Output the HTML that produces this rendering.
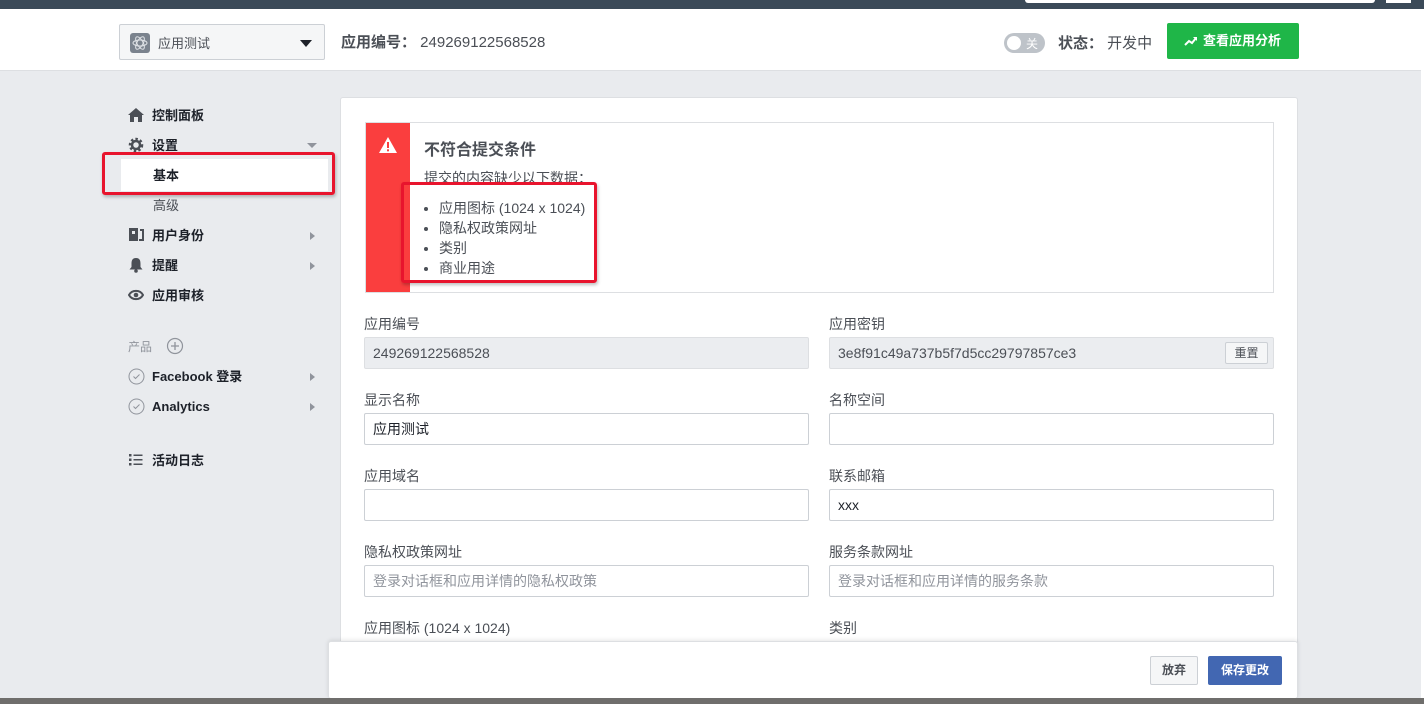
<!DOCTYPE html>
<html><head><meta charset="utf-8"><style>
*{box-sizing:border-box;margin:0;padding:0}
body{width:1424px;height:704px;overflow:hidden;background:#e9ebee;font-family:"Liberation Sans","Noto Sans CJK SC",sans-serif;color:#1d2129;position:relative}
.topbar{position:absolute;left:0;top:0;width:1424px;height:9px;background:#3b4a58}
.topbar .s{position:absolute;left:1025px;top:0;width:350px;height:3px;background:#fff;border-radius:0 0 3px 3px}
.topbar .s2{position:absolute;left:1386px;top:0;width:25px;height:3px;background:#fff}
.header{position:absolute;left:0;top:9px;width:1421px;height:62px;background:#fff;border-bottom:1px solid #dddfe2}
.rstrip{position:absolute;left:1421px;top:9px;width:3px;height:695px;background:#fff}
.sel{position:absolute;left:119px;top:24px;width:206px;height:36px;border:1px solid #ccd0d5;background:#f5f6f7;border-radius:2px}
.sel .ic{position:absolute;left:10px;top:8px;width:20px;height:20px;background:#7b838e;border-radius:3px}
.sel .t{position:absolute;left:38px;top:8px;font-size:13px;color:#4b4f56}
.sel .ar{position:absolute;right:12px;top:15px;border-left:6px solid transparent;border-right:6px solid transparent;border-top:7px solid #1d2129}
.appid{position:absolute;left:341px;top:31px;font-size:15px;color:#4b4f56}
.appid b{font-weight:bold;color:#4b4f56}
.tog{position:absolute;left:1004px;top:33px;width:41px;height:20px;border-radius:10px;background:#bec3c9}
.tog i{position:absolute;left:3px;top:3px;width:14px;height:14px;border-radius:50%;background:#fff}
.tog span{position:absolute;left:22px;top:2px;font-size:12px;color:#fff}
.status{position:absolute;left:1058px;top:32px;font-size:15px;color:#4b4f56}
.gbtn{position:absolute;left:1167px;top:23px;width:132px;height:36px;background:#1fb648;border-radius:2px;color:#fff;font-size:13px;font-weight:bold;line-height:36px;padding-left:36px}
.nav{position:absolute;left:128px;font-size:13px;font-weight:bold;color:#1d2129}
.nav .txt{position:absolute;left:24px;top:-2px;white-space:nowrap}
.tri{position:absolute;left:182px;top:5px;border-top:4px solid transparent;border-bottom:4px solid transparent;border-left:5px solid #90949c}
.sub{position:absolute;left:153px;font-size:13px;color:#4b4f56}
.redbox{position:absolute;border:3px solid #e8142d;border-radius:3px;box-shadow:1px 2px 3px rgba(0,0,0,.25)}
.panel{position:absolute;left:340px;top:97px;width:958px;height:600px;background:#fff;border:1px solid #dddfe2;border-radius:3px}
.warn{position:absolute;left:365px;top:122px;width:909px;height:171px;border:1px solid #dddfe2;background:#fff}
.warn .bar{position:absolute;left:0;top:0;width:44px;height:169px;background:#fa3e3e}
.warn h3{position:absolute;left:58px;top:13px;font-size:16px;font-weight:bold;color:#4b4f56}
.warn p{position:absolute;left:58px;top:45px;font-size:14px;color:#4b4f56}
.warn ul{position:absolute;left:73px;top:75px;font-size:14px;color:#4b4f56;line-height:20px}
.lbl{position:absolute;font-size:14px;color:#4b4f56}
.inp{position:absolute;width:445px;height:32px;border:1px solid #ccd0d5;border-radius:2px;background:#fff;font-size:14px;padding:7px 8px;color:#1d2129;line-height:16px}
.inp.ro{background:#ebedf0;border-color:#dddfe2;color:#4b4f56}
.inp.ph{color:#90949c}
.reset{position:absolute;right:5px;top:4px;height:22px;width:43px;border:1px solid #ccd0d5;background:#f5f6f7;font-size:12px;line-height:20px;text-align:center;color:#4b4f56;border-radius:2px}
.foot{position:absolute;left:328px;top:641px;width:970px;height:58px;background:#fff;border:1px solid #dddfe2;border-radius:3px;box-shadow:0 -1px 4px rgba(0,0,0,.1)}
.btn{position:absolute;top:14px;height:29px;font-size:12px;font-weight:bold;line-height:27px;text-align:center;border-radius:2px}
.bottom{position:absolute;left:0;top:698px;width:1424px;height:6px;background:#6f6e6c}
</style></head><body>
<div class="topbar"><div class="s"></div><div class="s2"></div></div>
<div class="header"></div>
<div class="rstrip"></div>
<div class="sel"><div class="ic"><svg width="20" height="20" viewBox="0 0 20 20"><g fill="none" stroke="#dfe2e6" stroke-width="1"><ellipse cx="10" cy="10" rx="7" ry="3"/><ellipse cx="10" cy="10" rx="7" ry="3" transform="rotate(60 10 10)"/><ellipse cx="10" cy="10" rx="7" ry="3" transform="rotate(120 10 10)"/></g></svg></div><div class="t">应用测试</div><div class="ar"></div></div>
<div class="appid"><b>应用编号：</b> 249269122568528</div>
<div class="tog"><i></i><span>关</span></div>
<div class="status"><b>状态：</b> 开发中</div>
<div class="gbtn"><svg style="position:absolute;left:17px;top:13px" width="14" height="10" viewBox="0 0 14 10"><path d="M1 9 L5 5 L8 7 L12 2" stroke="#fff" stroke-width="2" fill="none"/><path d="M9 1 H13 V5Z" fill="#fff"/></svg>查看应用分析</div>

<div class="nav" style="top:107px"><svg width="16" height="14" viewBox="0 0 16 14" style="position:absolute;left:0;top:1px"><path d="M8 0 L16 7 H14 V14 H10 V9 H6 V14 H2 V7 H0Z" fill="#4b4f56"/></svg><span class="txt">控制面板</span></div>
<div class="nav" style="top:137px"><svg width="16" height="16" viewBox="0 0 16 16" style="position:absolute;left:0;top:0"><circle cx="8" cy="8" r="5.5" fill="none" stroke="#4b4f56" stroke-width="3.5" stroke-dasharray="2.2 2"/><circle cx="8" cy="8" r="4" fill="none" stroke="#4b4f56" stroke-width="2.5"/></svg><span class="txt">设置</span><div style="position:absolute;left:179px;top:6px;border-left:5px solid transparent;border-right:5px solid transparent;border-top:5px solid #90949c"></div></div>
<div style="position:absolute;left:121px;top:159px;width:207px;height:32px;background:#fff"></div>
<div class="sub" style="top:165px;color:#1d2129;font-weight:bold">基本</div>
<div class="redbox" style="left:102px;top:152px;width:233px;height:43px"></div>
<div class="sub" style="top:195px">高级</div>
<div class="nav" style="top:227px"><svg width="16" height="15" viewBox="0 0 16 15" style="position:absolute;left:0;top:0"><path d="M1 1 H10 V14 H1Z M4 4 H7 V7 H4Z" fill="#4b4f56" fill-rule="evenodd"/><path d="M12 3 H15 V13 H11" stroke="#4b4f56" stroke-width="2" fill="none"/></svg><span class="txt">用户身份</span><div class="tri"></div></div>
<div class="nav" style="top:257px"><svg width="16" height="16" viewBox="0 0 16 16" style="position:absolute;left:0;top:0"><path d="M8 1 C4 1 3.5 4 3.5 7 V10 L1.5 12.5 H14.5 L12.5 10 V7 C12.5 4 12 1 8 1Z" fill="#4b4f56"/><circle cx="8" cy="14" r="1.8" fill="#4b4f56"/></svg><span class="txt">提醒</span><div class="tri"></div></div>
<div class="nav" style="top:287px"><svg width="16" height="12" viewBox="0 0 16 12" style="position:absolute;left:0;top:2px"><path d="M1 6 C4 0.5 12 0.5 15 6 C12 11.5 4 11.5 1 6Z" fill="none" stroke="#4b4f56" stroke-width="2"/><circle cx="8" cy="6" r="2.3" fill="#4b4f56"/></svg><span class="txt">应用审核</span></div>
<div style="position:absolute;left:128px;top:338px;font-size:12px;color:#90949c">产品</div>
<svg style="position:absolute;left:166px;top:337px" width="18" height="18" viewBox="0 0 18 18"><circle cx="9" cy="9" r="7.5" fill="none" stroke="#90949c" stroke-width="1.2"/><path d="M9 5V13M5 9H13" stroke="#90949c" stroke-width="1.3"/></svg>
<div class="nav" style="top:368px"><svg width="17" height="17" viewBox="0 0 17 17" style="position:absolute;left:0;top:0"><circle cx="8.5" cy="8.5" r="7.5" fill="none" stroke="#90949c"/><path d="M5.5 8.5 L7.5 10.5 L11.5 6.5" fill="none" stroke="#90949c"/></svg><span class="txt">Facebook 登录</span><div class="tri"></div></div>
<div class="nav" style="top:398px"><svg width="17" height="17" viewBox="0 0 17 17" style="position:absolute;left:0;top:0"><circle cx="8.5" cy="8.5" r="7.5" fill="none" stroke="#90949c"/><path d="M5.5 8.5 L7.5 10.5 L11.5 6.5" fill="none" stroke="#90949c"/></svg><span class="txt" style="top:1px">Analytics</span><div class="tri"></div></div>
<div class="nav" style="top:452px"><svg width="14" height="14" viewBox="0 0 14 14" style="position:absolute;left:1px;top:1px"><g fill="#4b4f56"><rect x="0" y="1" width="2.5" height="2.5"/><rect x="0" y="5.5" width="2.5" height="2.5"/><rect x="0" y="10" width="2.5" height="2.5"/><rect x="4.5" y="1.5" width="9" height="1.5"/><rect x="4.5" y="6" width="9" height="1.5"/><rect x="4.5" y="10.5" width="9" height="1.5"/></g></svg><span class="txt">活动日志</span></div>

<div class="panel"></div>
<div class="warn"><div class="bar"><svg style="position:absolute;left:12px;top:13px" width="20" height="18" viewBox="0 0 20 18"><path d="M10 1 L19 17 H1Z" fill="#fff"/><rect x="9" y="6" width="2" height="6" fill="#fa3e3e"/><rect x="9" y="13.3" width="2" height="2" fill="#fa3e3e"/></svg></div>
<h3>不符合提交条件</h3><p>提交的内容缺少以下数据：</p>
<ul><li>应用图标 (1024 x 1024)</li><li>隐私权政策网址</li><li>类别</li><li>商业用途</li></ul></div>
<div class="redbox" style="left:401px;top:182px;width:196px;height:101px"></div>

<div class="lbl" style="left:364px;top:314px">应用编号</div>
<div class="inp ro" style="left:364px;top:337px">249269122568528</div>
<div class="lbl" style="left:829px;top:314px">应用密钥</div>
<div class="inp ro" style="left:829px;top:337px">3e8f91c49a737b5f7d5cc29797857ce3<div class="reset">重置</div></div>
<div class="lbl" style="left:364px;top:390px">显示名称</div>
<div class="inp" style="left:364px;top:413px">应用测试</div>
<div class="lbl" style="left:829px;top:390px">名称空间</div>
<div class="inp" style="left:829px;top:413px"></div>
<div class="lbl" style="left:364px;top:466px">应用域名</div>
<div class="inp" style="left:364px;top:489px"></div>
<div class="lbl" style="left:829px;top:466px">联系邮箱</div>
<div class="inp" style="left:829px;top:489px">xxx</div>
<div class="lbl" style="left:364px;top:542px">隐私权政策网址</div>
<div class="inp ph" style="left:364px;top:565px">登录对话框和应用详情的隐私权政策</div>
<div class="lbl" style="left:829px;top:542px">服务条款网址</div>
<div class="inp ph" style="left:829px;top:565px">登录对话框和应用详情的服务条款</div>
<div class="lbl" style="left:364px;top:618px">应用图标 (1024 x 1024)</div>
<div class="lbl" style="left:829px;top:618px">类别</div>

<div class="foot">
<div class="btn" style="left:821px;width:48px;background:#f5f6f7;border:1px solid #ccd0d5;color:#4b4f56">放弃</div>
<div class="btn" style="left:879px;width:74px;background:#4267b2;border:1px solid #4267b2;color:#fff">保存更改</div>
</div>
<div class="bottom"></div>
</body></html>
